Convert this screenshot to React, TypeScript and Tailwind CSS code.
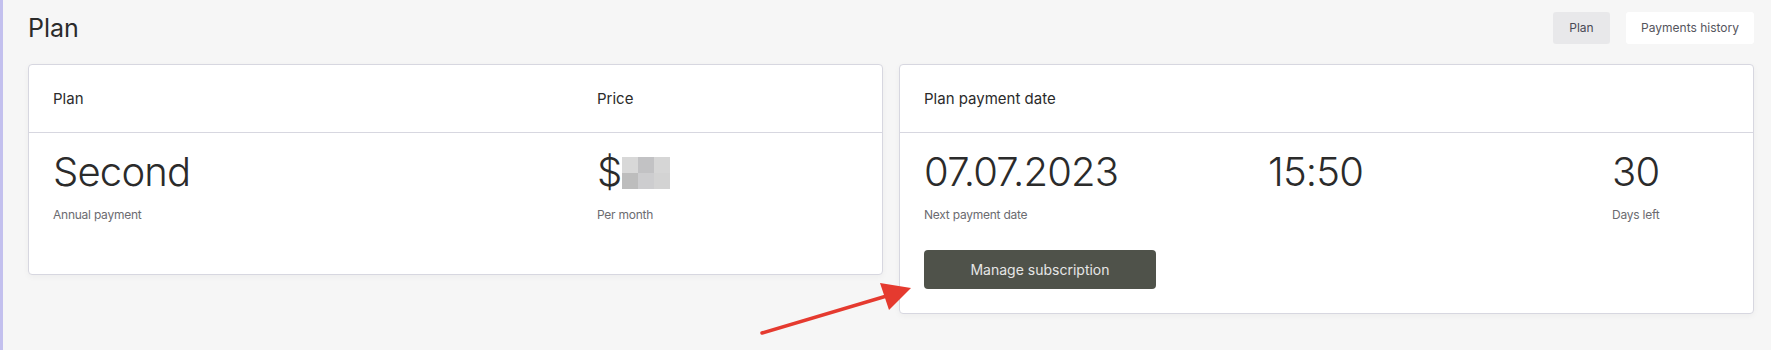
import React from 'react';

const font = { fontFamily: 'Inter, "Noto Sans", sans-serif' };

const Stat = ({ value, label, className = '' }: { value: React.ReactNode; label: string; className?: string }) => (
    <div className={className}>
        <div className="text-[40px] leading-[48px] font-light text-[#2b2b2b] tracking-[-0.02em]">{value}</div>
        <div className="mt-[11px] text-[12px] leading-[16px] text-[#6b6b70] tracking-[-0.02em]">{label}</div>
    </div>
);

const BlurredPrice = () => (
    <span className="inline-grid grid-cols-3 align-middle ml-[1px] translate-y-[-2px]">
        <span className="w-4 h-4 bg-[#d8d8d8]" />
        <span className="w-4 h-4 bg-[#c2c2c4]" />
        <span className="w-4 h-4 bg-[#d6d6d6]" />
        <span className="w-4 h-4 bg-[#bdbdbd]" />
        <span className="w-4 h-4 bg-[#cdcdcf]" />
        <span className="w-4 h-4 bg-[#d3d3d3]" />
    </span>
);

export default function App() {
    return (
        <div className="relative flex w-[1771px] h-[350px] bg-[#f6f6f6] overflow-hidden" style={font}>
            <div className="w-[3px] shrink-0 bg-[#c3c0ee]" />

            <div className="flex-1 pl-[25px] pr-[17px] pt-[12px]">
                {/* Header */}
                <div className="flex items-center justify-between h-[32px]">
                    <h1 className="text-[25px] text-[#2b2b2b] leading-none">Plan</h1>
                    <div className="flex items-center gap-4">
                        <button className="h-8 w-[57px] rounded-[3px] bg-[#e8e8ea] text-[12px] text-[#4a4a55]">Plan</button>
                        <button className="h-8 w-[128px] rounded-[3px] bg-white text-[12px] text-[#55555d]">Payments history</button>
                    </div>
                </div>

                <div className="flex items-start gap-4 mt-[20px]">
                    {/* Plan card */}
                    <div className="w-[855px] h-[211px] bg-white border border-[#d7d7e0] rounded-[4px] shadow-[0_2px_6px_rgba(0,0,0,0.04)]">
                        <div className="flex h-[68px] items-center pt-[2px] px-6 border-b border-[#d7d7e0] text-[15px] text-[#2b2b2b]">
                            <div className="w-[544px]">Plan</div>
                            <div>Price</div>
                        </div>
                        <div className="flex px-6 pt-[15px]">
                            <Stat className="w-[544px]" value="Second" label="Annual payment" />
                            <Stat value={<span>$<BlurredPrice /></span>} label="Per month" />
                        </div>
                    </div>

                    {/* Payment date card */}
                    <div className="flex-1 h-[250px] bg-white border border-[#d7d7e0] rounded-[4px] shadow-[0_2px_6px_rgba(0,0,0,0.04)]">
                        <div className="flex h-[68px] items-center pt-[2px] px-6 border-b border-[#d7d7e0] text-[15px] text-[#2b2b2b]">
                            Plan payment date
                        </div>
                        <div className="px-6 pt-[15px]">
                            <div className="flex">
                                <Stat className="w-[344px]" value="07.07.2023" label="Next payment date" />
                                <Stat className="w-[344px]" value="15:50" label="" />
                                <Stat value="30" label="Days left" />
                            </div>
                            <button className="mt-[27px] w-[232px] h-[39px] rounded-[4px] bg-[#4f524a] text-[14px] text-[#e6e6e6]">
                                Manage subscription
                            </button>
                        </div>
                    </div>
                </div>
            </div>

            {/* Annotation arrow */}
            <svg className="absolute left-0 top-0 pointer-events-none" width="1771" height="350">
                <line x1="762" y1="333" x2="890" y2="295" stroke="#e53a2f" strokeWidth="3.5" strokeLinecap="round" />
                <polygon points="911,288 880,283 889,310" fill="#e53a2f" />
            </svg>
        </div>
    );
}
